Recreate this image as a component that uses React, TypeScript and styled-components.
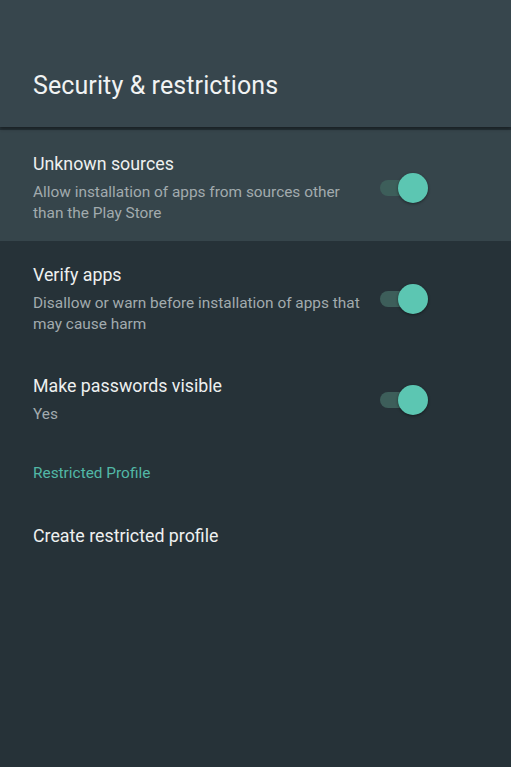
import React from "react";
import styled, { createGlobalStyle } from "styled-components";

const Global = createGlobalStyle`
  html, body { margin: 0; padding: 0; background: #263238; }
  body { font-family: Roboto, "Noto Sans", "Liberation Sans", sans-serif; }
`;

const Page = styled.div`
  width: 511px;
  height: 767px;
  background: #263238;
  display: flex;
  flex-direction: column;
  overflow: hidden;
`;

const Header = styled.header`
  height: 127px;
  box-sizing: border-box;
  background: #37464d;
  padding: 0 33px 25px 33px;
  display: flex;
  align-items: flex-end;
  box-shadow: 0 2px 3px rgba(0, 0, 0, 0.35);
  position: relative;
  z-index: 1;
`;

const Title = styled.h1`
  margin: 0;
  font-size: 25px;
  font-weight: 400;
  color: #f1f3f3;
  line-height: 32px;
  letter-spacing: 0.1px;
`;

const List = styled.div`
  display: flex;
  flex-direction: column;
  padding-top: 3px;
`;

const Row = styled.div<{ $focused?: boolean }>`
  display: flex;
  align-items: center;
  padding: 22px 83px 17px 33px;
  background: ${(p) => (p.$focused ? "#36454b" : "transparent")};
`;

const Texts = styled.div`
  flex: 1;
  display: flex;
  flex-direction: column;
  min-width: 0;
`;

const ItemTitle = styled.div`
  font-size: 17.8px;
  line-height: 24px;
  color: #eef0f0;
`;

const ItemSub = styled.div`
  margin-top: 6px;
  max-width: 338px;
  font-size: 15.4px;
  line-height: 21px;
  color: #a2abae;
`;

const Switch = styled.div`
  position: relative;
  width: 48px;
  height: 30px;
  flex: none;
  margin-left: 8px;
`;

const Track = styled.div`
  position: absolute;
  left: 0;
  top: 7px;
  width: 40px;
  height: 16px;
  border-radius: 8px;
  background: #3d5e5a;
`;

const Thumb = styled.div`
  position: absolute;
  right: 0;
  top: 0;
  width: 30px;
  height: 30px;
  border-radius: 50%;
  background: #5cc6b2;
  box-shadow: 0 1px 3px rgba(0, 0, 0, 0.45);
`;

const SectionLabel = styled.div`
  padding: 21px 33px 0 33px;
  font-size: 15.4px;
  line-height: 21px;
  color: #52b8a6;
`;

const Action = styled.div`
  padding: 40px 33px 0 33px;
  font-size: 17.8px;
  line-height: 24px;
  color: #eef0f0;
`;

const Toggle = () => (
  <Switch>
    <Track />
    <Thumb />
  </Switch>
);

export default function App() {
  return (
    <Page>
      <Global />
      <Header>
        <Title>Security &amp; restrictions</Title>
      </Header>
      <List>
        <Row $focused>
          <Texts>
            <ItemTitle>Unknown sources</ItemTitle>
            <ItemSub>Allow installation of apps from sources other than the Play Store</ItemSub>
          </Texts>
          <Toggle />
        </Row>
        <Row>
          <Texts>
            <ItemTitle>Verify apps</ItemTitle>
            <ItemSub>Disallow or warn before installation of apps that may cause harm</ItemSub>
          </Texts>
          <Toggle />
        </Row>
        <Row>
          <Texts>
            <ItemTitle>Make passwords visible</ItemTitle>
            <ItemSub>Yes</ItemSub>
          </Texts>
          <Toggle />
        </Row>
        <SectionLabel>Restricted Profile</SectionLabel>
        <Action>Create restricted profile</Action>
      </List>
    </Page>
  );
}
